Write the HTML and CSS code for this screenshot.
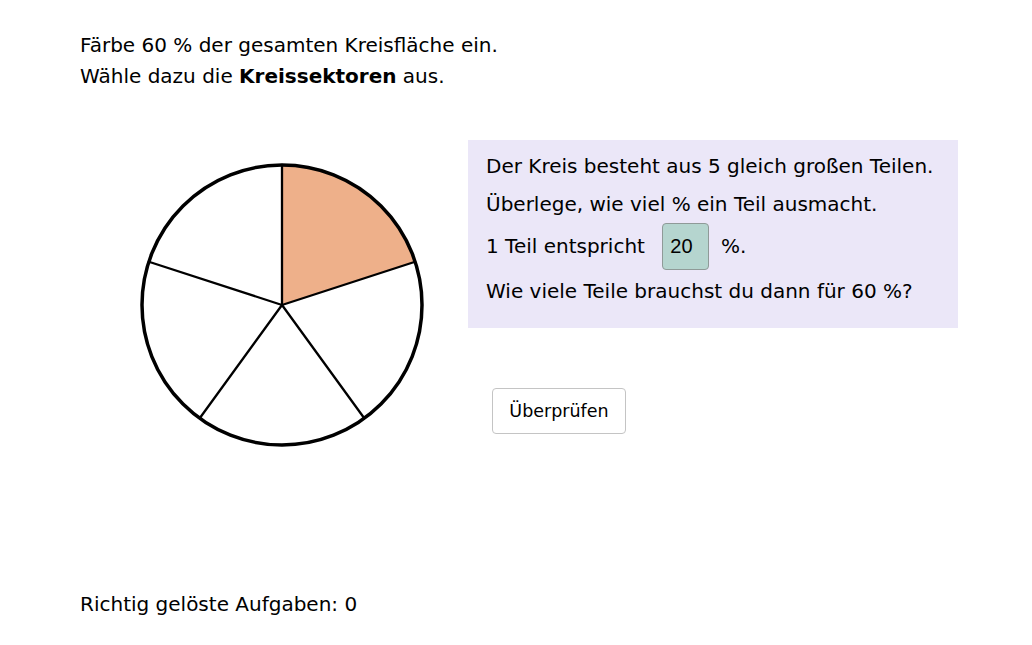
FILE: index.html
```html
<!DOCTYPE html>
<html lang="de">
<head>
<meta charset="utf-8">
<link rel="stylesheet" href="styles.css">
</head>
<body>
<div class="page">
  <div class="task">
    <p>Färbe 60 % der gesamten Kreisfläche ein.</p>
    <p>Wähle dazu die <b>Kreissektoren</b> aus.</p>
  </div>
  <div class="main">
    <svg class="pie" width="290" height="290" viewBox="0 0 290 290">
      <path d="M145 145 L145 5 A140 140 0 0 1 278.15 101.74 Z" fill="#eeb08a"/>
      <g stroke="#000" stroke-width="2.3" stroke-linecap="round">
        <line x1="145" y1="145" x2="145" y2="5"/>
        <line x1="145" y1="145" x2="278.15" y2="101.74"/>
        <line x1="145" y1="145" x2="227.29" y2="258.26"/>
        <line x1="145" y1="145" x2="62.71" y2="258.26"/>
        <line x1="145" y1="145" x2="11.85" y2="101.74"/>
      </g>
      <circle cx="145" cy="145" r="140" fill="none" stroke="#000" stroke-width="3.5"/>
    </svg>
    <div class="side">
      <div class="panel">
        <p>Der Kreis besteht aus 5 gleich großen Teilen.</p>
        <p>Überlege, wie viel % ein Teil ausmacht.</p>
        <p class="row">1 Teil entspricht <span class="field">20</span> %.</p>
        <p class="last">Wie viele Teile brauchst du dann für 60 %?</p>
      </div>
      <button class="check">Überprüfen</button>
    </div>
  </div>
  <div class="footer">Richtig gelöste Aufgaben: 0</div>
</div>
</body>
</html>
```
FILE: styles.css
```css
html, body {
  margin: 0;
  padding: 0;
  background: #fff;
}
.page {
  width: 1032px;
  height: 645px;
  position: relative;
  font-family: "DejaVu Sans", sans-serif;
  color: #000;
  font-size: 20px;
}
p { margin: 0; }
.task {
  padding: 30px 0 0 80px;
  line-height: 31px;
}
.main {
  display: flex;
  padding-left: 137px;
  margin-top: 48px;
  gap: 41px;
}
.pie {
  margin-top: 20px;
  display: block;
}
.side {
  display: flex;
  flex-direction: column;
  align-items: flex-start;
}
.panel {
  width: 490px;
  height: 188px;
  box-sizing: border-box;
  background: #ebe7f8;
  padding: 7px 0 0 18px;
  line-height: 38px;
}
.panel .row {
  display: flex;
  align-items: center;
  height: 46px;
}
.panel .last {
  margin-top: 3px;
}
.field {
  display: inline-flex;
  align-items: center;
  justify-content: center;
  width: 47px;
  height: 47px;
  box-sizing: border-box;
  margin: 0 12px 0 17px;
  background: #b5d5cf;
  border: 1px solid #8f9a98;
  border-radius: 4px;
  font-family: "Liberation Sans", Arial, sans-serif;
  font-size: 20px;
  padding-right: 8px;
}
.check {
  margin: 60px 0 0 24px;
  width: 134px;
  height: 46px;
  background: #fff;
  border: 1px solid #c4c4c4;
  border-radius: 4px;
  font-family: "DejaVu Sans", sans-serif;
  font-size: 17.5px;
  color: #000;
  padding: 0;
}
.footer {
  position: absolute;
  left: 80px;
  top: 589px;
  line-height: 30px;
}
```
